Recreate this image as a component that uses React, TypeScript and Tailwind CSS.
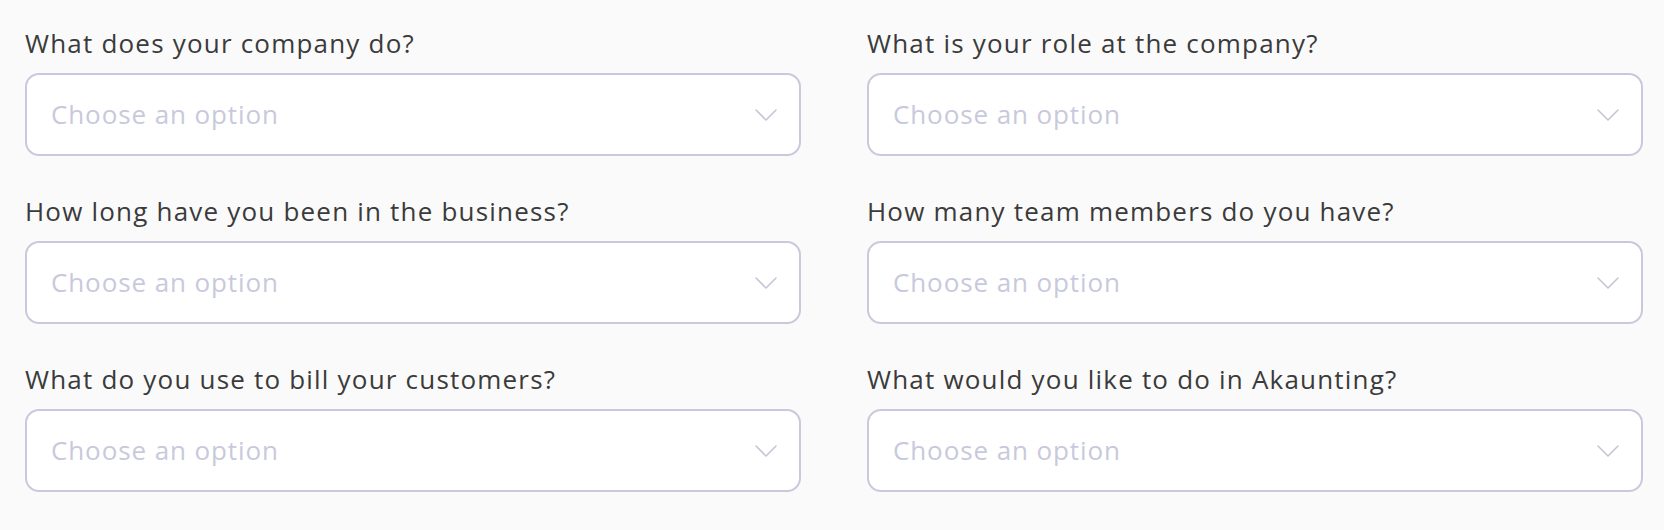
import React from "react";

const fields = [
  "What does your company do?",
  "What is your role at the company?",
  "How long have you been in the business?",
  "How many team members do you have?",
  "What do you use to bill your customers?",
  "What would you like to do in Akaunting?",
];

function Chevron() {
  return (
    <svg width="22" height="12" viewBox="0 0 22 12" fill="none" className="shrink-0">
      <path d="M1 1l10 10L21 1" stroke="#c6c6d6" strokeWidth="1.6" strokeLinecap="round" strokeLinejoin="round" />
    </svg>
  );
}

function SelectField({ label }: { label: string }) {
  return (
    <div className="flex flex-col">
      <label className="mb-3 text-[26px] leading-[36px] tracking-[1.2px] text-[#3b3b3b]">{label}</label>
      <div className="flex h-[83px] items-center justify-between rounded-[14px] border-2 border-[#c9c9dc] bg-white pl-[24px] pr-[22px]">
        <span className="text-[26px] tracking-[0.9px] text-[#c8c9dc]">Choose an option</span>
        <Chevron />
      </div>
    </div>
  );
}

export default function App() {
  return (
    <div className="min-h-[530px] bg-[#fafafa] pl-[25px] pr-[21px] pt-[25px] pb-[38px] font-['Open_Sans',sans-serif]">
      <div className="grid grid-cols-2 gap-x-[66px] gap-y-[37px]">
        {fields.map((f) => (
          <SelectField key={f} label={f} />
        ))}
      </div>
    </div>
  );
}
